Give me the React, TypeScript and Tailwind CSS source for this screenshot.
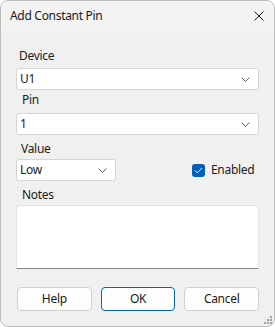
import React from 'react';

const font = { fontFamily: '"Segoe UI", "Noto Sans", sans-serif' };

function Chevron() {
  return (
    <svg width="9" height="5" viewBox="0 0 9 5" className="shrink-0">
      <path d="M0.5 0.5 L4.5 4.5 L8.5 0.5" fill="none" stroke="#606060" strokeWidth="1" />
    </svg>
  );
}

function Combo({ value, className = '' }: { value: string; className?: string }) {
  return (
    <div
      className={`h-[22px] flex items-center justify-between pl-[3px] pr-[8px] bg-white border border-[#d5d5d5] rounded-[3px] ${className}`}
    >
      <span className="text-[12px] leading-[16px] tracking-[-0.3px] text-[#1b1b1b]">{value}</span>
      <Chevron />
    </div>
  );
}

function Label({ text, className = '' }: { text: string; className?: string }) {
  return (
    <div className={`h-[16px] text-[12px] leading-[16px] tracking-[-0.3px] text-[#1b1b1b] ${className}`}>{text}</div>
  );
}

function Button({ text, primary }: { text: string; primary?: boolean }) {
  return (
    <button
      className={`w-[75px] h-[24px] rounded-[4px] bg-[#fdfdfd] text-[12px] tracking-[-0.3px] text-[#1b1b1b] border ${
        primary ? 'border-[#0067c0]' : 'border-[#d0d0d0]'
      }`}
    >
      {text}
    </button>
  );
}

export default function App() {
  return (
    <div style={font} className="relative w-[275px] h-[327px] rounded-[8px] border border-[#bcbcbc] bg-[#f0f0f0] overflow-hidden flex flex-col">
      {/* Title bar */}
      <div className="h-[30px] shrink-0 flex items-center justify-between pl-[9px] pr-[10px] bg-[#f3f3f3]">
        <span className="text-[12px] leading-[16px] tracking-[-0.3px] text-[#1b1b1b]">Add Constant Pin</span>
        <svg width="10" height="10" viewBox="0 0 10 10">
          <path d="M0.5 0.5 L9.5 9.5 M9.5 0.5 L0.5 9.5" stroke="#1b1b1b" strokeWidth="1" />
        </svg>
      </div>

      {/* Body */}
      <div className="flex-1 flex flex-col px-[15px] pt-[17px]">
        <Label text="Device" className="pl-[3px]" />
        <Combo value="U1" className="mt-[4px]" />

        <Label text="Pin" className="pl-[6px] mt-[2px]" />
        <Combo value="1" className="mt-[5px]" />

        <Label text="Value" className="pl-[5px] mt-[6px]" />
        <div className="flex items-center mt-[2px]">
          <Combo value="Low" className="w-[100px]" />
          <div className="flex items-center ml-[76px]">
            <div className="w-[13px] h-[13px] rounded-[3px] bg-[#005fb8] flex items-center justify-center">
              <svg width="9" height="7" viewBox="0 0 9 7">
                <path d="M1 3.5 L3.3 5.8 L8 1" fill="none" stroke="white" strokeWidth="1" />
              </svg>
            </div>
            <span className="ml-[6px] text-[12px] leading-[16px] tracking-[-0.3px] text-[#1b1b1b]">Enabled</span>
          </div>
        </div>

        <Label text="Notes" className="pl-[6px] mt-[6px]" />
        <div className="mt-[2px] h-[64px] bg-white border border-[#e3e3e3] border-b-[#868686] rounded-t-[3px]" />

        <div className="flex gap-[9px] mt-[18px] pl-[1px]">
          <Button text="Help" />
          <Button text="OK" primary />
          <Button text="Cancel" />
        </div>
      </div>

      {/* Resize grip */}
      <svg width="9" height="9" viewBox="0 0 9 9" className="absolute right-[2px] bottom-[2px]">
        <rect x="7" y="1" width="2" height="2" fill="#a0a0a0" />
        <rect x="4" y="4" width="2" height="2" fill="#a0a0a0" />
        <rect x="7" y="4" width="2" height="2" fill="#a0a0a0" />
        <rect x="1" y="7" width="2" height="2" fill="#a0a0a0" />
        <rect x="4" y="7" width="2" height="2" fill="#a0a0a0" />
        <rect x="7" y="7" width="2" height="2" fill="#a0a0a0" />
      </svg>
    </div>
  );
}
